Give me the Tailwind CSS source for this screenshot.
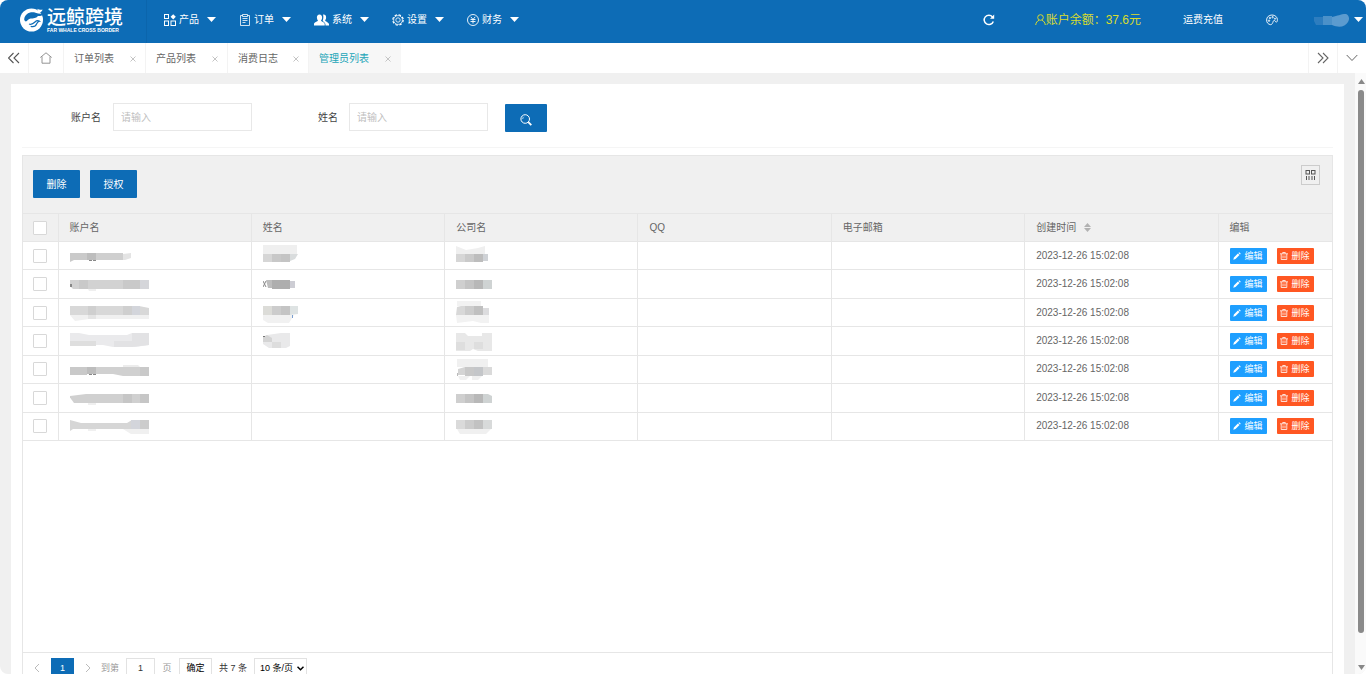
<!DOCTYPE html>
<html lang="zh-CN">
<head>
<meta charset="utf-8">
<title>管理员列表</title>
<script src="https://cdn.jsdelivr.net/npm/@tailwindcss/browser@4"></script>
</head>
<body class="h-screen overflow-hidden bg-white font-['Liberation_Sans','Noto_Sans_CJK_SC',sans-serif] text-[10px] leading-4 text-[#666]">
<svg class="hidden">
  <symbol id="caret" viewBox="0 0 9 5"><path d="M0 0h9L4.500 5z" fill="currentColor"/></symbol>
  <symbol id="close" viewBox="0 0 8 8"><path d="M1.500 1.500l5 5M6.500 1.500l-5 5" fill="none" stroke="#c4c4c4"/></symbol>
  <symbol id="pencil" viewBox="0 0 8 8"><path d="M.3 7.700l.6-2.200L4.900 1.500l1.600 1.600-4 4zM5.400 1l.8-.8 1.600 1.600-.8.8z" fill="currentColor"/></symbol>
  <symbol id="trash" viewBox="0 0 8 8"><path d="M0 1.800h8M2.700 1.500V.500h2.600v1M1.200 2v5.500h5.600V2M3 3.500v2.800M5 3.500v2.800" fill="none" stroke="currentColor" stroke-width=".8"/></symbol>
</svg>
<div class="flex h-full flex-col overflow-hidden rounded-lg">
  <header class="flex h-[43px] shrink-0 items-center bg-[#0d6cb6] text-white">
    <a href="#" class="flex h-full w-[147px] items-center gap-[3px] border-r border-[#0b65ac] pb-1 pl-5">
      <svg class="size-6 shrink-0" viewBox="0 0 24 24">
        <circle cx="11.500" cy="12" r="11.500" fill="#fff"/>
        <path d="M24 4.500c-2.500 2-5.500 1-8.500.2C10 3.200 4.500 6 4.200 11.500c.2 1.200.8 1.800 1.800 2 1.600-1 2.500-2.800 4.600-3 2.600-.2 5.400 0 7.400-2.500 3 0 5-.5 6-3.500z" fill="#0d6cb6"/>
        <path d="M17.500.8c1.200 1 2.600 1.300 5 .8-.3 1.700-1.400 2.700-3.300 3-1-.2-1.900-1.400-1.700-3.800z" fill="#fff"/>
        <path d="M8.500 9.500l2-.8M9 16c2.500 1 4.500-.500 6-2 1.300-1.300 3-1.600 4.500-.8-1.500.3-2.300 1.400-2.800 2.600-1 2.400-3.200 3.400-6 2.600" fill="none" stroke="#0d6cb6" stroke-width="1.200"/>
      </svg>
      <span class="flex flex-col items-start gap-[3px] whitespace-nowrap">
        <span class="font-['Noto_Sans_CJK_SC',sans-serif] text-[19px] leading-[17px] font-medium">远鲸跨境</span>
        <span class="text-[5px] leading-[6px] font-bold">FAR WHALE CROSS BORDER</span>
      </span>
    </a>
    <nav class="flex items-center gap-[23px] pb-1 pl-[17px]">
      <a href="#" class="flex items-center gap-2"><span class="flex items-center gap-[3px]">
        <svg class="size-3" viewBox="0 0 12 12" fill="none" stroke="currentColor"><rect x=".5" y=".5" width="4" height="4"/><rect x=".5" y="7" width="4" height="4.500"/><rect x="7" y="7" width="4.500" height="4.500"/><path d="M9.200.2l2.600 2.600-2.600 2.600-2.600-2.600z" fill="currentColor" stroke="none"/></svg>产品</span>
        <svg class="h-[5px] w-[9px]"><use href="#caret"/></svg></a>
      <a href="#" class="flex items-center gap-2"><span class="flex items-center gap-[3px]">
        <svg class="size-3" viewBox="0 0 12 12" fill="none" stroke="currentColor" stroke-width=".8"><path d="M3.500 1.500h-2v10h9v-10h-2M3.500.5h5v2h-5zM3.500 4.500h5M3.500 6.500h5M3.500 8.500h3"/></svg>订单</span>
        <svg class="h-[5px] w-[9px]"><use href="#caret"/></svg></a>
      <a href="#" class="flex items-center gap-2"><span class="flex items-center gap-[3px]">
        <svg class="h-3 w-[15px]" viewBox="0 0 15 12" fill="currentColor"><path d="M5.500.5c1.800 0 2.700 1.300 2.600 3.200C8 5 7.500 6 6.900 6.600c.2 1 3.600 1.700 3.800 3.400v1.500H0V10c.2-1.700 3.800-2.400 4-3.400C3.400 6 3 5 2.900 3.700 2.800 1.800 3.700.5 5.500.5z"/><path d="M9 .6c2-.3 3.200 1 3.100 3 0 1.300-.5 2.200-1 2.800.2 1 3.600 1.700 3.900 3.600v1.500h-3.500c.2-2-.8-3.300-2.800-4.500C9.400 5 9.600 2.500 9 .6z"/></svg>系统</span>
        <svg class="h-[5px] w-[9px]"><use href="#caret"/></svg></a>
      <a href="#" class="flex items-center gap-2"><span class="flex items-center gap-[3px]">
        <svg class="size-3" viewBox="0 0 12 12" fill="none" stroke="currentColor"><circle cx="6" cy="6" r="5.200" stroke-dasharray="2.450 1.630" stroke-width="1.200"/><circle cx="6" cy="6" r="4.400" stroke-width=".7"/><circle cx="6" cy="6" r="2.200" stroke-width=".8"/></svg>设置</span>
        <svg class="h-[5px] w-[9px]"><use href="#caret"/></svg></a>
      <a href="#" class="flex items-center gap-2"><span class="flex items-center gap-[3px]">
        <svg class="size-3" viewBox="0 0 12 12" fill="none" stroke="currentColor" stroke-width=".9"><circle cx="6" cy="6" r="5.500"/><path d="M3.800 2.800L6 5.500l2.200-2.700M6 5.500v4M3.500 5.500h5M3.500 7.500h5"/></svg>财务</span>
        <svg class="h-[5px] w-[9px]"><use href="#caret"/></svg></a>
    </nav>
    <div class="ml-auto flex items-center pr-[3px] pb-1">
      <button aria-label="刷新" class="mr-10"><svg class="size-3" viewBox="0 0 12 12" fill="none" stroke="currentColor" stroke-width="1.500"><path d="M10.300 7.500A4.700 4.700 0 1 1 9.500 2.900"/><path d="M11.200.6v4.200H7z" fill="currentColor" stroke="none"/></svg></button>
      <a href="#" class="mr-[42px] flex items-center text-xs text-[#d9dc2e]"><svg class="size-[11px]" viewBox="0 0 11 11" fill="none" stroke="currentColor"><circle cx="5.500" cy="3.500" r="2.800"/><path d="M.7 11c.3-2.500 1.600-4 3.300-4.700M10.300 11C10 8.500 8.700 7 7 6.300"/></svg>账户余额：37.6元</a>
      <a href="#" class="mr-[43px]">运费充值</a>
      <button aria-label="主题" class="mr-9"><svg class="size-3" viewBox="0 0 12 12" fill="none" stroke="currentColor" stroke-width=".9"><path d="M4.700 10.700C2 10.300.6 8.500.6 6 .6 3 3 1 6 1s5.400 2 5.400 4.700c0 1.600-.5 2.500-1.200 2.500-.9 0-.6-1.700-1.900-1.700-1.500 0-1 1.800-2 3-.4.600-.9 1.300-1.600 1.200z"/><circle cx="3" cy="6.700" r=".7"/><circle cx="3.900" cy="4" r=".7"/><circle cx="6.600" cy="3.200" r=".7"/><circle cx="9" cy="4.700" r=".6"/></svg></button>
      <a href="#" aria-label="用户" class="flex items-center gap-1"><svg class="h-4 w-9" viewBox="0 0 36 16"><path d="M0 5h9v8H2L0 9z" fill="#2d7dbf"/><path d="M9 4h9v9H9z" fill="#4b91c9"/><path d="M18 5c6-1 8-3 14-3 3 1 4 5 2 8-3 5-9 6-16 3z" fill="#5b9bcf"/></svg><svg class="h-[5px] w-[9px]"><use href="#caret"/></svg></a>
    </div>
  </header>

  <div class="flex h-[30px] shrink-0 items-stretch bg-white">
    <button aria-label="向左" class="flex w-[29px] items-center justify-center border-r border-[#f3f3f3]"><svg class="size-3" viewBox="0 0 12 12" fill="none" stroke="#555" stroke-width="1.100"><path d="M5.500 1l-5 5 5 5M11 1L6 6l5 5"/></svg></button>
    <a href="#" aria-label="首页" class="flex w-[35px] items-center justify-center border-r border-[#f3f3f3]"><svg class="size-3" viewBox="0 0 12 12" fill="none" stroke="#888" stroke-width=".9"><path d="M.3 5.500L6 .8l5.700 4.700M2 4.500v6.700h8V4.500"/></svg></a>
    <a href="#" class="flex w-[82px] items-center justify-between border-r border-[#f3f3f3] pt-px pr-2 pl-[10px]">订单列表<svg class="size-2"><use href="#close"/></svg></a>
    <a href="#" class="flex w-[82px] items-center justify-between border-r border-[#f3f3f3] pt-px pr-2 pl-[10px]">产品列表<svg class="size-2"><use href="#close"/></svg></a>
    <a href="#" class="flex w-[81px] items-center justify-between border-r border-[#f3f3f3] pt-px pr-2 pl-[10px]">消费日志<svg class="size-2"><use href="#close"/></svg></a>
    <a href="#" class="flex w-[92px] items-center justify-between bg-[#f7f7f7] pt-px pr-[9px] pl-[10px] text-[#22a5b8]">管理员列表<svg class="size-2"><use href="#close"/></svg></a>
    <button aria-label="向右" class="ml-auto flex w-[30px] items-center justify-center border-x border-[#f3f3f3]"><svg class="size-3" viewBox="0 0 12 12" fill="none" stroke="#666" stroke-width="1.100"><path d="M1 1l5 5-5 5M6 1l5 5-5 5"/></svg></button>
    <button aria-label="更多" class="flex w-7 items-center justify-center"><svg class="size-3" viewBox="0 0 12 12" fill="none" stroke="#666"><path d="M.7 3L6 8.500 11.300 3"/></svg></button>
  </div>

  <div class="flex min-h-0 flex-1 bg-[#f0f0f0]">
    <main class="mx-[11px] mt-[11px] flex min-w-0 flex-1 flex-col overflow-hidden bg-white px-[11px]">
      <form class="flex h-16 shrink-0 items-start border-b border-[#f5f5f5] pt-[19px] pl-[49px] text-[#444]">
        <label for="account" class="flex h-7 w-[42px] items-center pt-px">账户名</label>
        <input id="account" placeholder="请输入" class="h-7 w-[139px] border border-[#e8e8e8] px-[7px] outline-none placeholder:text-[#c0c0c0]">
        <label for="fullname" class="ml-[66px] flex h-7 w-[31px] items-center pt-px">姓名</label>
        <input id="fullname" placeholder="请输入" class="h-7 w-[139px] border border-[#e8e8e8] px-[7px] outline-none placeholder:text-[#c0c0c0]">
        <button type="button" aria-label="搜索" class="mt-px ml-[17px] flex h-7 w-[42px] items-center justify-center rounded-[1px] bg-[#0d6cb6] pt-[3px] text-white"><svg class="size-3" viewBox="0 0 12 12" fill="none" stroke="currentColor"><circle cx="5.200" cy="5" r="4.300"/><path d="M2.700 5a2.500 2.500 0 0 1 1.200-2.200" stroke-width=".7"/><path d="M8.300 8.200l3 3" stroke-width="1.800"/></svg></button>
      </form>

      <section class="mt-[7px] flex min-h-0 flex-1 flex-col border border-b-0 border-[#e6e6e6]">
        <div class="flex h-[57px] shrink-0 items-start gap-[10px] bg-[#f0f0f0] pr-3 pl-[10px]">
          <button class="mt-[14px] h-7 w-[47px] rounded-[1px] bg-[#0d6cb6] pt-px text-white">删除</button>
          <button class="mt-[14px] h-7 w-[47px] rounded-[1px] bg-[#0d6cb6] pt-px text-white">授权</button>
          <button aria-label="筛选列" class="mt-[9px] ml-auto flex h-5 w-[19px] items-center justify-center border border-[#ccc]"><svg class="h-[10px] w-[11px]" viewBox="0 0 11 10" fill="none" stroke="#555"><rect x="1" y=".5" width="3.500" height="3.500"/><rect x="6.500" y=".5" width="3.500" height="3.500"/><path d="M1.500 6v4M4 6v4M7 6v4M9.500 6v4"/></svg></button>
        </div>
        <table class="h-[228px] w-full shrink-0 table-fixed border-collapse text-left [&_td]:border-b [&_td]:border-l [&_td]:border-[#e6e6e6] [&_td]:p-0 [&_td]:pl-[11px] [&_td:first-child]:border-l-0 [&_td:first-child]:pl-[10px] [&_th]:border-y [&_th]:border-l [&_th]:border-[#e6e6e6] [&_th]:p-0 [&_th]:pl-[11px] [&_th]:font-normal [&_th:first-child]:border-l-0 [&_th:first-child]:pl-[10px]">
          <thead class="bg-[#f0f0f0]">
            <tr class="h-7">
              <th class="w-[35px]"><input type="checkbox" aria-label="全选" class="block size-[14px] appearance-none rounded-[1px] border border-[#d8d8d8] bg-white"></th>
              <th>账户名</th><th>姓名</th><th>公司名</th><th>QQ</th><th>电子邮箱</th>
              <th><span class="flex items-center gap-2">创建时间<svg class="h-[9px] w-[7px]" viewBox="0 0 7 9" fill="#b2b2b2"><path d="M0 4l3.500-4L7 4zM0 5h7L3.500 9z"/></svg></span></th>
              <th class="w-[114px]">编辑</th>
            </tr>
          </thead>
          <tbody>
            <tr>
              <td><input type="checkbox" aria-label="选择第1行" class="block size-[14px] appearance-none rounded-[1px] border border-[#d8d8d8] bg-white"></td>
              <td><svg class="block h-6 w-20" viewBox="1 0 80 24"><path d="M1 9h26v7H5l-4 2z" fill="#cacaca"/><path d="M18 9h9v7h-9z" fill="#bdbdbd"/><path d="M27 9h27v7H27z" fill="#cfcfcf"/><path d="M54 10l8-1v5l-6 2h-2z" fill="#e4e4e4"/><path d="M20 16h3v1h-3zM24 16h3v1h-3z" fill="#888"/></svg></td>
              <td><svg class="block h-6 w-9" viewBox="1 0 36 24"><path d="M1 1h34v9H1z" fill="#efefef"/><path d="M1 10h9v8H1z" fill="#d6d6d6"/><path d="M10 10h9v8h-9z" fill="#c8c8c8"/><path d="M19 10h9v8h-9z" fill="#c4c4c4"/><path d="M28 10h8l-3 5-5 2z" fill="#d9dcdd"/></svg></td>
              <td><svg class="block h-6 w-9" viewBox="0 0 36 24"><path d="M0 2l10 4 12-2 7-2v8H0z" fill="#efefef"/><path d="M0 10h9v8H0z" fill="#d6d6d6"/><path d="M9 10h9v8H9z" fill="#cacaca"/><path d="M18 10h9v8h-9z" fill="#bdbdbd"/><path d="M27 10h5v7h-5z" fill="#cfd2d6"/></svg></td>
              <td></td><td></td><td>2023-12-26 15:02:08</td>
              <td><span class="flex gap-[10px] text-[9px] text-white"><button class="flex h-4 w-[37px] items-center justify-center gap-[3px] rounded-[1px] bg-[#1e9fff]"><svg class="size-2"><use href="#pencil"/></svg>编辑</button><button class="flex h-4 w-[37px] items-center justify-center gap-[3px] rounded-[1px] bg-[#ff5722]"><svg class="size-2"><use href="#trash"/></svg>删除</button></span></td>
            </tr>
            <tr>
              <td><input type="checkbox" aria-label="选择第2行" class="block size-[14px] appearance-none rounded-[1px] border border-[#d8d8d8] bg-white"></td>
              <td><svg class="block h-6 w-20" viewBox="1 0 80 24"><path d="M1 8h79v9H4l-3-3z" fill="#d2d2d2"/><path d="M10 8h9v9h-9zM54 8h17v9H54z" fill="#c9c9c9"/><path d="M71 8h9v9h-9z" fill="#d5d6da"/><path d="M19 17h8v2h-7z" fill="#efefef"/><path d="M1 12h2v3H1z" fill="#888"/></svg></td>
              <td><svg class="block h-6 w-9" viewBox="1 0 36 24"><path d="M4 8h6v8H6z" fill="#bdbdbd"/><path d="M10 8h18v9H10z" fill="#aeaeae"/><path d="M28 9h5v7h-5z" fill="#cdcdd4"/><path d="M1 9l3 6M4 9l-3 6" stroke="#888" fill="none"/></svg></td>
              <td><svg class="block h-6 w-9" viewBox="0 0 36 24"><path d="M0 8h9v9H0z" fill="#cfcfcf"/><path d="M9 8h9v9H9z" fill="#c4c4c4"/><path d="M18 8h9v9h-9z" fill="#b8b8b8"/><path d="M27 8h9v9h-9z" fill="#cfd3d3"/></svg></td>
              <td></td><td></td><td>2023-12-26 15:02:08</td>
              <td><span class="flex gap-[10px] text-[9px] text-white"><button class="flex h-4 w-[37px] items-center justify-center gap-[3px] rounded-[1px] bg-[#1e9fff]"><svg class="size-2"><use href="#pencil"/></svg>编辑</button><button class="flex h-4 w-[37px] items-center justify-center gap-[3px] rounded-[1px] bg-[#ff5722]"><svg class="size-2"><use href="#trash"/></svg>删除</button></span></td>
            </tr>
            <tr>
              <td><input type="checkbox" aria-label="选择第3行" class="block size-[14px] appearance-none rounded-[1px] border border-[#d8d8d8] bg-white"></td>
              <td><svg class="block h-6 w-20" viewBox="1 0 80 24"><path d="M1 5h69l10 2v7H1z" fill="#d8d8d8"/><path d="M19 5h8v9h-8zM54 5h9v9h-9z" fill="#cfcfcf"/><path d="M63 5h8v9h-8z" fill="#d3d5db"/><path d="M1 14h79v4H20L6 20z" fill="#f0f0f0"/><path d="M19 14h8v4h-8z" fill="#e4e4e4"/></svg></td>
              <td><svg class="block h-6 w-9" viewBox="1 0 36 24"><path d="M1 5h9v9H1z" fill="#dcdcd8"/><path d="M10 5h9v9h-9z" fill="#ccc"/><path d="M19 5h9v9h-9z" fill="#c4c4c4"/><path d="M28 5h8v8l-8 1z" fill="#dee3e3"/><path d="M1 14h31l-5 8H6l-5-3z" fill="#f1f1f1"/><path d="M30 14h1v3h-1z" fill="#7a9fd0"/></svg></td>
              <td><svg class="block h-6 w-9" viewBox="0 0 36 24"><path d="M1 0h24v5H1zM0 14h33v8h-8l-8-2-16 2z" fill="#f2f2f2"/><path d="M1 6l4-1h4v9H0z" fill="#d8d8d8"/><path d="M9 5h9v9H9z" fill="#ccc"/><path d="M18 5h9v9h-9z" fill="#c0c0c0"/><path d="M27 7h6v7h-6z" fill="#dcdcde"/></svg></td>
              <td></td><td></td><td>2023-12-26 15:02:08</td>
              <td><span class="flex gap-[10px] text-[9px] text-white"><button class="flex h-4 w-[37px] items-center justify-center gap-[3px] rounded-[1px] bg-[#1e9fff]"><svg class="size-2"><use href="#pencil"/></svg>编辑</button><button class="flex h-4 w-[37px] items-center justify-center gap-[3px] rounded-[1px] bg-[#ff5722]"><svg class="size-2"><use href="#trash"/></svg>删除</button></span></td>
            </tr>
            <tr>
              <td><input type="checkbox" aria-label="选择第4行" class="block size-[14px] appearance-none rounded-[1px] border border-[#d8d8d8] bg-white"></td>
              <td><svg class="block h-6 w-20" viewBox="1 0 80 24"><path d="M1 4h9l10 2h38l5-2h17v12l-14 2H44l-10-2H1z" fill="#eaeaec"/><path d="M1 12h26v5H1z" fill="#dedede"/><path d="M45 12h18v6H45zM63 4h17v12l-17 2z" fill="#e2e2e4"/></svg></td>
              <td><svg class="block h-6 w-9" viewBox="1 0 36 24"><path d="M1 8l4-2 14-2h9v13l-4 2H7l-6-4z" fill="#e9e9ea"/><path d="M1 8l4-2 5 3v4H1z" fill="#d4d4d4"/><path d="M10 13h9v6h-9z" fill="#ddd"/><path d="M1 7h2v1H1z" fill="#777"/></svg></td>
              <td><svg class="block h-6 w-9" viewBox="0 0 36 24"><path d="M0 4h9l3 3h14V4h10v18H22l-5-2-3 2H0z" fill="#e8e8e8"/><path d="M0 13h9v8H0zM18 13h9v7h-9z" fill="#dedede"/></svg></td>
              <td></td><td></td><td>2023-12-26 15:02:08</td>
              <td><span class="flex gap-[10px] text-[9px] text-white"><button class="flex h-4 w-[37px] items-center justify-center gap-[3px] rounded-[1px] bg-[#1e9fff]"><svg class="size-2"><use href="#pencil"/></svg>编辑</button><button class="flex h-4 w-[37px] items-center justify-center gap-[3px] rounded-[1px] bg-[#ff5722]"><svg class="size-2"><use href="#trash"/></svg>删除</button></span></td>
            </tr>
            <tr>
              <td><input type="checkbox" aria-label="选择第5行" class="block size-[14px] appearance-none rounded-[1px] border border-[#d8d8d8] bg-white"></td>
              <td><svg class="block h-6 w-20" viewBox="1 0 80 24"><path d="M1 10h79v9H54l-10-2H1z" fill="#d0d0d0"/><path d="M18 10h9v7h-9z" fill="#bdbdbd"/><path d="M1 10h17v8H1zM71 10h9v9h-9z" fill="#c9c9c9"/><path d="M54 8h15l2 2H54z" fill="#ececec"/><path d="M20 17h3v1h-3zM24 17h3v1h-3z" fill="#888"/></svg></td>
              <td></td>
              <td><svg class="block h-6 w-9" viewBox="0 0 36 24"><path d="M1 2h31v8H1zM2 19h12l-4 4H4zM16 19h10l-4 4h-6z" fill="#f0f0f0"/><path d="M2 12l7-2v8H2z" fill="#d4d4d4"/><path d="M9 10h9v9H9z" fill="#c8c8c8"/><path d="M18 10h9v9h-9z" fill="#c4c6c9"/><path d="M27 10h9v8h-9z" fill="#dadada"/><path d="M1 16h1v3H1z" fill="#bbb"/></svg></td>
              <td></td><td></td><td>2023-12-26 15:02:08</td>
              <td><span class="flex gap-[10px] text-[9px] text-white"><button class="flex h-4 w-[37px] items-center justify-center gap-[3px] rounded-[1px] bg-[#1e9fff]"><svg class="size-2"><use href="#pencil"/></svg>编辑</button><button class="flex h-4 w-[37px] items-center justify-center gap-[3px] rounded-[1px] bg-[#ff5722]"><svg class="size-2"><use href="#trash"/></svg>删除</button></span></td>
            </tr>
            <tr>
              <td><input type="checkbox" aria-label="选择第6行" class="block size-[14px] appearance-none rounded-[1px] border border-[#d8d8d8] bg-white"></td>
              <td><svg class="block h-6 w-20" viewBox="1 0 80 24"><path d="M0 10l17-2h63v9H5z" fill="#d0d0d0"/><path d="M54 8h9v9h-9zM71 8h9v9h-9z" fill="#c6c6c6"/><path d="M19 17h8v2h-8z" fill="#efefef"/></svg></td>
              <td></td>
              <td><svg class="block h-6 w-9" viewBox="0 0 36 24"><path d="M0 8h9v9H0z" fill="#cfcfcf"/><path d="M9 8h9v9H9z" fill="#c4c4c4"/><path d="M18 8h9v9h-9z" fill="#b8b8b8"/><path d="M27 8h5l4 2v7h-9z" fill="#cfd3d3"/></svg></td>
              <td></td><td></td><td>2023-12-26 15:02:08</td>
              <td><span class="flex gap-[10px] text-[9px] text-white"><button class="flex h-4 w-[37px] items-center justify-center gap-[3px] rounded-[1px] bg-[#1e9fff]"><svg class="size-2"><use href="#pencil"/></svg>编辑</button><button class="flex h-4 w-[37px] items-center justify-center gap-[3px] rounded-[1px] bg-[#ff5722]"><svg class="size-2"><use href="#trash"/></svg>删除</button></span></td>
            </tr>
            <tr>
              <td><input type="checkbox" aria-label="选择第7行" class="block size-[14px] appearance-none rounded-[1px] border border-[#d8d8d8] bg-white"></td>
              <td><svg class="block h-6 w-20" viewBox="1 0 80 24"><path d="M1 6l11 3h46l5-3h17v9H4l-3 2z" fill="#d6d6d6"/><path d="M62 6h9v9h-9z" fill="#d3d5db"/><path d="M71 6h9v9h-9z" fill="#ccc"/><path d="M54 15h26v5H62zM19 15h8v2h-8z" fill="#f0f0f0"/></svg></td>
              <td></td>
              <td><svg class="block h-6 w-9" viewBox="0 0 36 24"><path d="M0 6h9v9H0z" fill="#dadada"/><path d="M9 6h9v9H9z" fill="#ccc"/><path d="M18 6h9v9h-9z" fill="#c2c2c2"/><path d="M27 6h9v9h-9z" fill="#d8dada"/><path d="M1 15h34l-5 5H4z" fill="#f0f0f0"/></svg></td>
              <td></td><td></td><td>2023-12-26 15:02:08</td>
              <td><span class="flex gap-[10px] text-[9px] text-white"><button class="flex h-4 w-[37px] items-center justify-center gap-[3px] rounded-[1px] bg-[#1e9fff]"><svg class="size-2"><use href="#pencil"/></svg>编辑</button><button class="flex h-4 w-[37px] items-center justify-center gap-[3px] rounded-[1px] bg-[#ff5722]"><svg class="size-2"><use href="#trash"/></svg>删除</button></span></td>
            </tr>
          </tbody>
        </table>
        <div class="mt-auto flex h-[22px] shrink-0 items-start border-t border-[#e6e6e6] pt-[5px] pl-[11px] text-[9px] text-[#333]">
          <button aria-label="上一页" class="flex h-5 w-[17px] items-center"><svg class="h-2 w-[6px]" viewBox="0 0 6 8" fill="none" stroke="#bbb"><path d="M5 0L1 4l4 4"/></svg></button>
          <button class="h-5 w-[23px] bg-[#0d6cb6] text-white">1</button>
          <button aria-label="下一页" class="flex h-5 w-[27px] items-center justify-center"><svg class="h-2 w-[6px]" viewBox="0 0 6 8" fill="none" stroke="#bbb"><path d="M1 0l4 4-4 4"/></svg></button>
          <label for="page" class="flex h-5 w-[25px] items-center text-[#999]">到第</label>
          <input id="page" value="1" class="h-5 w-[29px] border border-[#e2e2e2] text-center outline-none">
          <span class="flex h-5 w-6 items-center justify-center text-[#999]">页</span>
          <button class="h-5 w-[33px] border border-[#e2e2e2] text-black">确定</button>
          <span class="ml-[7px] flex h-5 w-[35px] items-center whitespace-nowrap">共 7 条</span>
          <span class="relative flex">
            <select aria-label="每页条数" class="h-5 w-[53px] appearance-none border border-[#e2e2e2] bg-white pl-[5px] text-black"><option>10 条/页</option></select>
            <svg class="pointer-events-none absolute top-2 right-[3px] h-[5px] w-[7px]" viewBox="0 0 7 5" fill="none" stroke="#000" stroke-width="1.500"><path d="M.5.700l3 3 3-3"/></svg>
          </span>
        </div>
      </section>
    </main>
    <div class="flex w-[11px] shrink-0 flex-col items-center bg-[#fafafa] pt-[6px] pb-1 pl-px" aria-hidden="true">
      <svg class="h-[5px] w-[7px] shrink-0" viewBox="0 0 7 5"><path d="M0 5h7L3.500 0z" fill="#888"/></svg>
      <div class="mt-[6px] mb-8 w-[6px] flex-1 rounded-full bg-[#8a8a8a]"></div>
      <svg class="h-[5px] w-[7px] shrink-0" viewBox="0 0 7 5"><path d="M0 0h7L3.500 5z" fill="#888"/></svg>
    </div>
  </div>
</div>
</body>
</html>
